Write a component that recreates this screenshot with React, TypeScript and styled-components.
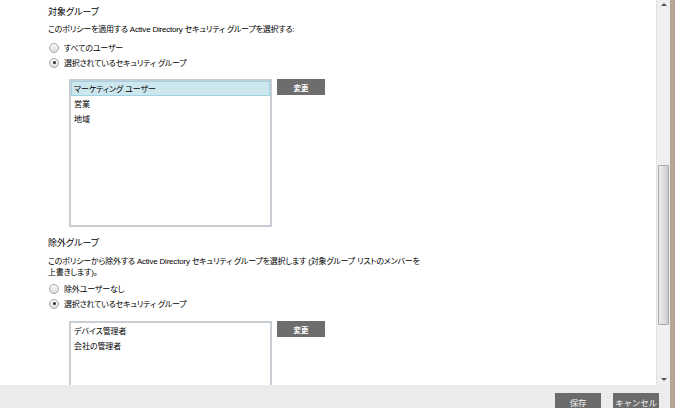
import React from "react";
import styled, { createGlobalStyle } from "styled-components";

const GlobalStyle = createGlobalStyle`
  html, body {
    margin: 0;
    padding: 0;
    background: #ffffff;
  }
  body {
    font-family: "Liberation Sans", "Noto Sans CJK JP", sans-serif;
    font-feature-settings: "palt";
    color: #000;
  }
`;

const Page = styled.div`
  display: flex;
  width: 675px;
  height: 408px;
  overflow: hidden;
`;

const Main = styled.div`
  flex: 1;
  display: flex;
  flex-direction: column;
`;

const ScrollArea = styled.div`
  flex: 1;
  display: flex;
  min-height: 0;
`;

const Edge = styled.div`
  width: 5px;
  background: #b5a593;
`;

const Content = styled.div`
  flex: 1;
  padding: 5px 0 0 48px;
  overflow: hidden;
  background: #fff;
`;

const Track = styled.div`
  width: 13px;
  display: flex;
  flex-direction: column;
  align-items: center;
  background: #efefef;
  border-left: 1px solid #e2e2e2;
`;

const Arrow = styled.div<{ $down?: boolean }>`
  width: 0;
  height: 0;
  margin: ${(p) => (p.$down ? "auto 0 4px" : "3px 0 0")};
  border-left: 3px solid transparent;
  border-right: 3px solid transparent;
  ${(p) => (p.$down ? "border-top: 3px solid #555;" : "border-bottom: 3px solid #555;")}
`;

const Thumb = styled.div`
  width: 11px;
  height: 160px;
  margin-top: 159px;
  box-sizing: border-box;
  border: 1px solid #a9a9a9;
  border-radius: 1px;
  background: linear-gradient(to right, #ececec, #dcdcdc 60%, #c9c9c9);
`;

const Heading = styled.div<{ $gap?: number }>`
  font-size: 9px;
  line-height: 14px;
  margin-top: ${(p) => p.$gap ?? 0}px;
`;

const Description = styled.div<{ $gap: number }>`
  font-size: 8px;
  line-height: 11px;
  letter-spacing: -0.2px;
  margin-top: ${(p) => p.$gap}px;
`;

const RadioGroup = styled.div<{ $gap: number }>`
  margin-top: ${(p) => p.$gap}px;
`;

const RadioRow = styled.label`
  display: flex;
  align-items: center;
  height: 15px;
  font-size: 8px;
  letter-spacing: -0.2px;
`;

const RadioCircle = styled.span<{ $checked?: boolean }>`
  position: relative;
  width: 10px;
  height: 10px;
  box-sizing: border-box;
  margin: 0 5px 0 1px;
  border: 1px solid #a4a4a4;
  border-radius: 50%;
  background: linear-gradient(#fafafa, #dedede);
  &::after {
    content: "";
    display: ${(p) => (p.$checked ? "block" : "none")};
    position: absolute;
    left: 2.5px;
    top: 2.5px;
    width: 3px;
    height: 3px;
    border-radius: 50%;
    background: #2a2a2a;
  }
`;

const ListRow = styled.div<{ $gap: number }>`
  display: flex;
  align-items: flex-start;
  gap: 5px;
  margin: ${(p) => p.$gap}px 0 0 21px;
`;

const ListBox = styled.div<{ $height: number }>`
  width: 203px;
  height: ${(p) => p.$height}px;
  box-sizing: border-box;
  border: 2px solid #c8ced4;
  padding: 0 1px;
`;

const ListItem = styled.div<{ $selected?: boolean }>`
  height: 15px;
  box-sizing: border-box;
  display: flex;
  align-items: center;
  margin: 0 -1px;
  padding-left: 2px;
  font-size: 8px;
  letter-spacing: -0.1px;
  background: ${(p) => (p.$selected ? "#cde7ef" : "transparent")};
  border: 1px solid ${(p) => (p.$selected ? "#9fd2e2" : "transparent")};
`;

const ChangeButton = styled.button`
  width: 48px;
  height: 16px;
  border: 0;
  padding: 0;
  background: #6d6d6d;
  color: #fff;
  font-family: inherit;
  font-size: 7.5px;
  font-weight: bold;
`;

const Footer = styled.div`
  height: 23px;
  display: flex;
  justify-content: flex-end;
  align-items: flex-start;
  gap: 12px;
  padding: 8px 11px 0 0;
  box-sizing: border-box;
  background: #ebecee;
  overflow: hidden;
`;

const FooterButton = styled.button`
  width: 46px;
  height: 20px;
  flex-shrink: 0;
  border: 0;
  padding: 0 0 2px;
  background: #6b6b6b;
  color: #f4f4f4;
  font-family: inherit;
  font-size: 8.5px;
  letter-spacing: -0.2px;
  white-space: nowrap;
`;

interface RadioOption {
  label: string;
  checked?: boolean;
}

const Radios: React.FC<{ options: RadioOption[]; gap: number }> = ({ options, gap }) => (
  <RadioGroup $gap={gap}>
    {options.map((o) => (
      <RadioRow key={o.label}>
        <RadioCircle $checked={o.checked} />
        {o.label}
      </RadioRow>
    ))}
  </RadioGroup>
);

const GroupList: React.FC<{ items: string[]; selected?: number; height: number; gap: number }> = (props) => (
  <ListRow $gap={props.gap}>
    <ListBox $height={props.height}>
      {props.items.map((item, i) => (
        <ListItem key={item} $selected={i === props.selected}>
          {item}
        </ListItem>
      ))}
    </ListBox>
    <ChangeButton>変更</ChangeButton>
  </ListRow>
);

const App: React.FC = () => {
  return (
    <Page>
      <GlobalStyle />
      <Main>
        <ScrollArea>
          <Content>
            <Heading>対象グループ</Heading>
            <Description $gap={5}>
              このポリシーを適用する Active Directory セキュリティ グループを選択する:
            </Description>
            <Radios
              gap={5}
              options={[
                { label: "すべてのユーザー" },
                { label: "選択されているセキュリティ グループ", checked: true },
              ]}
            />
            <GroupList
              gap={9}
              height={148}
              selected={0}
              items={["マーケティング ユーザー", "営業", "地域"]}
            />

            <Heading $gap={9}>除外グループ</Heading>
            <Description $gap={6}>
              このポリシーから除外する Active Directory セキュリティ グループを選択します (対象グループ リストのメンバーを
              <br />
              上書きします)。
            </Description>
            <Radios
              gap={3}
              options={[
                { label: "除外ユーザーなし" },
                { label: "選択されているセキュリティ グループ", checked: true },
              ]}
            />
            <GroupList gap={10} height={148} items={["デバイス管理者", "会社の管理者"]} />
          </Content>
          <Track>
            <Arrow />
            <Thumb />
            <Arrow $down />
          </Track>
        </ScrollArea>
        <Footer>
          <FooterButton>保存</FooterButton>
          <FooterButton>キャンセル</FooterButton>
        </Footer>
      </Main>
      <Edge />
    </Page>
  );
};

export default App;
